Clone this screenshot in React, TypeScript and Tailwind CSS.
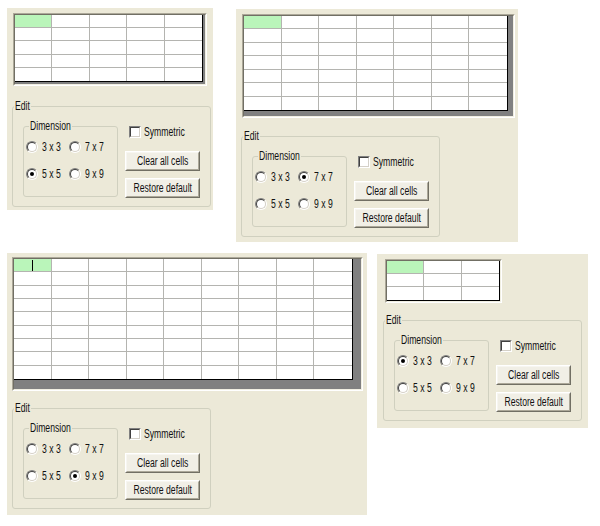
import React from "react";

function T({ children, w }: { children: React.ReactNode; w?: string }) {
  return (
    <span className={"inline-block whitespace-nowrap " + (w ?? "")}>
      <span className="inline-block origin-left scale-x-[0.72] whitespace-nowrap">{children}</span>
    </span>
  );
}

function Radio({ label, checked }: { label: string; checked?: boolean }) {
  return (
    <div className="flex items-center h-[16px]">
      <span className="flex w-[12px] h-[12px] shrink-0 rounded-full border border-t-[#808080] border-l-[#808080] border-r-white border-b-white">
        <span className="flex flex-1 items-center justify-center rounded-full border border-t-[#404040] border-l-[#404040] border-r-[#D4D0C8] border-b-[#D4D0C8] bg-white">
          {checked && <span className="w-[4px] h-[4px] rounded-full bg-black" />}
        </span>
      </span>
      <span className="ml-[4px] leading-[16px]">
        <T>{label}</T>
      </span>
    </div>
  );
}

function Button({ label }: { label: string }) {
  return (
    <div className="w-[75px] h-[20px] flex border border-t-white border-l-white border-r-[#716F64] border-b-[#716F64]">
      <div className="flex flex-1 min-w-0 items-center justify-center border border-t-[#F7F6F1] border-l-[#F7F6F1] border-r-[#ACA899] border-b-[#ACA899] bg-[#F1EFE6] leading-[14px] whitespace-nowrap">
        <span className="inline-block shrink-0 origin-center scale-x-[0.72] whitespace-nowrap">{label}</span>
      </div>
    </div>
  );
}

function EditBox({ dim }: { dim: number }) {
  return (
    <fieldset className="w-[199px] h-[107px] border border-[#D0D0BF] rounded-[3px]">
      <legend className="ml-[1px] px-[1px] leading-[12px]">
        <T w="w-[15px]">Edit</T>
      </legend>
      <div className="flex items-start pl-[10px]">
        <fieldset className="w-[95px] h-[77px] mt-[8px] border border-[#D0D0BF] rounded-[3px]">
          <legend className="ml-[5px] px-[1px] leading-[12px]">
            <T w="w-[41px]">Dimension</T>
          </legend>
          <div className="grid grid-cols-[43px_43px] gap-y-[11px] pl-[2px] pt-[7px]">
            <Radio label="3 x 3" checked={dim === 3} />
            <Radio label="7 x 7" checked={dim === 7} />
            <Radio label="5 x 5" checked={dim === 5} />
            <Radio label="9 x 9" checked={dim === 9} />
          </div>
        </fieldset>
        <div className="ml-[7px] pt-[14px] flex flex-col">
          <div className="flex items-center h-[12px] pl-[4px]">
            <span className="flex w-[12px] h-[12px] shrink-0 border border-t-[#808080] border-l-[#808080] border-r-white border-b-white">
              <span className="flex-1 border border-t-[#404040] border-l-[#404040] border-r-[#D4D0C8] border-b-[#D4D0C8] bg-white" />
            </span>
            <span className="ml-[3px] leading-[12px]">
              <T>Symmetric</T>
            </span>
          </div>
          <div className="mt-[13px]">
            <Button label="Clear all cells" />
          </div>
          <div className="mt-[7px]">
            <Button label="Restore default" />
          </div>
        </div>
      </div>
    </fieldset>
  );
}

function Cells({ n, cls, cursor }: { n: number; cls: string; cursor?: boolean }) {
  const cells = [];
  for (let r = 0; r < n; r++) {
    for (let c = 0; c < n; c++) {
      const first = r === 0 && c === 0;
      const lastC = c === n - 1;
      const lastR = r === n - 1;
      cells.push(
        <div
          key={r + "-" + c}
          className={
            "relative border-[#B4B4B0] " +
            (lastC ? "" : "border-r ") +
            (lastR ? "" : "border-b ") +
            (first ? "bg-[#BAF5BA]" : "bg-white")
          }
        >
          {first && cursor && <span className="absolute left-[18px] top-[1px] w-[1px] h-[11px] bg-black" />}
        </div>
      );
    }
  }
  return <div className={"grid border-r border-b border-black bg-white " + cls}>{cells}</div>;
}

function Frame({ cls, children }: { cls: string; children: React.ReactNode }) {
  return (
    <div className={"flex border border-t-[#ACA899] border-l-[#ACA899] border-r-white border-b-white " + cls}>
      <div className="flex-1 border border-t-[#716F64] border-l-[#716F64] border-r-[#F1EFE2] border-b-[#F1EFE2] bg-[#808080]">
        {children}
      </div>
    </div>
  );
}

export default function App() {
  return (
    <div className="w-[600px] h-[526px] bg-white text-[#111] text-[12px] font-['Liberation_Sans',Arial,sans-serif]">
      <div className="flex items-start pl-[7px] pt-[8px] gap-[23px]">
        <div className="w-[206px] h-[202px] pt-[5px] bg-[#ECE9D8] flex flex-col">
          <Frame cls="ml-[6px] w-[194px] h-[73px]">
            <Cells n={5} cls="grid-cols-5 grid-rows-5 w-[188px] h-[67px]" />
          </Frame>
          <div className="mt-[14px] ml-[5px]">
            <EditBox dim={5} />
          </div>
        </div>
        <div className="mt-[1px] w-[282px] h-[233px] pt-[5px] bg-[#ECE9D8] flex flex-col">
          <Frame cls="ml-[6px] w-[273px] h-[104px]">
            <Cells n={7} cls="grid-cols-7 grid-rows-7 w-[264px] h-[95px]" />
          </Frame>
          <div className="mt-[12px] ml-[5px]">
            <EditBox dim={7} />
          </div>
        </div>
      </div>
      <div className="flex items-start pl-[7px] mt-[11px] gap-[10px]">
        <div className="w-[360px] h-[262px] pt-[4px] bg-[#ECE9D8] flex flex-col">
          <Frame cls="ml-[5px] w-[351px] h-[134px]">
            <Cells n={9} cls="grid-cols-9 grid-rows-9 w-[339px] h-[121px]" cursor />
          </Frame>
          <div className="mt-[11px] ml-[5px]">
            <EditBox dim={9} />
          </div>
        </div>
        <div className="mt-[1px] w-[211px] h-[174px] pt-[5px] bg-[#ECE9D8] flex flex-col">
          <Frame cls="ml-[8px] w-[117px] h-[44px]">
            <Cells n={3} cls="grid-cols-3 grid-rows-3 w-[113px] h-[40px]" />
          </Frame>
          <div className="mt-[11px] ml-[6px]">
            <EditBox dim={3} />
          </div>
        </div>
      </div>
    </div>
  );
}
